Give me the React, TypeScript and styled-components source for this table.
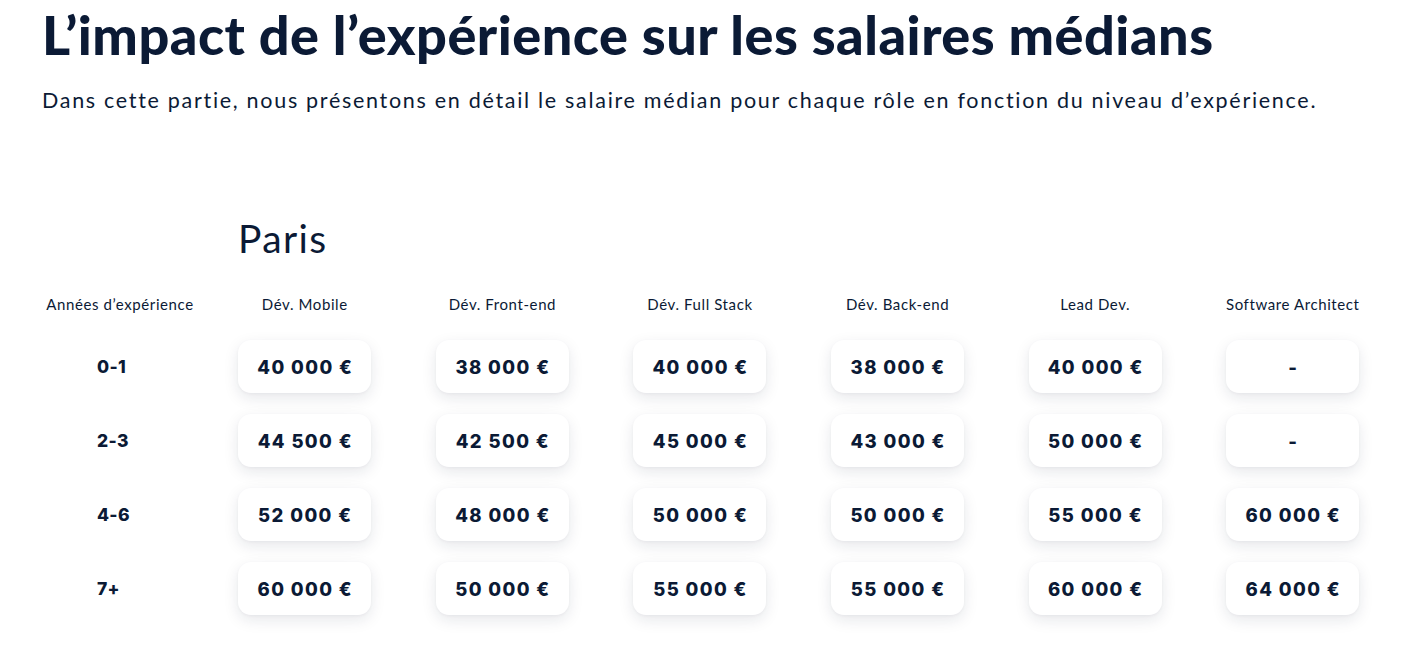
import React from "react";
import styled, { createGlobalStyle } from "styled-components";

const GlobalStyle = createGlobalStyle`
  html, body { margin: 0; padding: 0; background: #ffffff; }
  body { font-family: "Lato", "Noto Sans", sans-serif; color: #0b1a35; }
`;

const Page = styled.main`
  min-height: 100vh;
  box-sizing: border-box;
  padding: 3px 42px 40px 42px;
`;

const Title = styled.h1`
  margin: 0;
  font-size: 54px;
  font-weight: 900;
  line-height: 64px;
  letter-spacing: 0.5px;
  color: #0b1a35;
`;

const Lead = styled.p`
  margin: 19px 0 0 0;
  font-size: 21.5px;
  line-height: 28px;
  font-weight: 400;
  letter-spacing: 1.7px;
  color: #0b1a35;
`;

const Table = styled.section`
  margin-top: 101px;
  display: grid;
  grid-template-columns: 164px repeat(6, 197.6px);
  row-gap: 21px;
  align-items: center;
`;

const City = styled.h2`
  grid-column: 2 / span 6;
  margin: 0 0 13px 32px;
  font-size: 39px;
  font-weight: 400;
  line-height: 46px;
  letter-spacing: 1.4px;
  color: #0b1a35;
`;

const HeadCell = styled.div<{ $first?: boolean }>`
  font-size: 15px;
  line-height: 18px;
  letter-spacing: 0.6px;
  text-align: center;
  color: #0b1a35;
  padding-right: ${(p) => (p.$first ? "8px" : "0")};
  margin-bottom: 6px;
  white-space: nowrap;
`;

const Years = styled.div`
  padding-left: 55px;
  font-family: "Inter", "Lato", sans-serif;
  font-size: 17.5px;
  font-weight: 800;
  letter-spacing: 0.3px;
  color: #0b1a35;
`;

const CardCell = styled.div`
  display: flex;
  justify-content: center;
`;

const Card = styled.div`
  width: 133px;
  height: 53px;
  border-radius: 13px;
  background: #ffffff;
  box-shadow: 0 5px 15px rgba(20, 30, 60, 0.1), 0 1px 3px rgba(20, 30, 60, 0.04);
  display: flex;
  align-items: center;
  justify-content: center;
  padding-left: 1px;
  box-sizing: border-box;
  font-family: "Inter", "Lato", sans-serif;
  font-size: 18.5px;
  font-weight: 800;
  letter-spacing: 1.4px;
  color: #0b1a35;
  white-space: nowrap;
`;

const roles = [
  "Dév. Mobile",
  "Dév. Front-end",
  "Dév. Full Stack",
  "Dév. Back-end",
  "Lead Dev.",
  "Software Architect",
];

const rows: { years: string; values: string[] }[] = [
  { years: "0-1", values: ["40 000 €", "38 000 €", "40 000 €", "38 000 €", "40 000 €", "-"] },
  { years: "2-3", values: ["44 500 €", "42 500 €", "45 000 €", "43 000 €", "50 000 €", "-"] },
  { years: "4-6", values: ["52 000 €", "48 000 €", "50 000 €", "50 000 €", "55 000 €", "60 000 €"] },
  { years: "7+", values: ["60 000 €", "50 000 €", "55 000 €", "55 000 €", "60 000 €", "64 000 €"] },
];

export default function App() {
  return (
    <>
      <GlobalStyle />
      <Page>
        <Title>L’impact de l’expérience sur les salaires médians</Title>
        <Lead>
          Dans cette partie, nous présentons en détail le salaire médian pour chaque rôle en fonction du niveau d’expérience.
        </Lead>
        <Table>
          <City>Paris</City>
          <HeadCell $first>Années d’expérience</HeadCell>
          {roles.map((r) => (
            <HeadCell key={r}>{r}</HeadCell>
          ))}
          {rows.map((row) => (
            <React.Fragment key={row.years}>
              <Years>{row.years}</Years>
              {row.values.map((v, i) => (
                <CardCell key={i}>
                  <Card>{v}</Card>
                </CardCell>
              ))}
            </React.Fragment>
          ))}
        </Table>
      </Page>
    </>
  );
}
